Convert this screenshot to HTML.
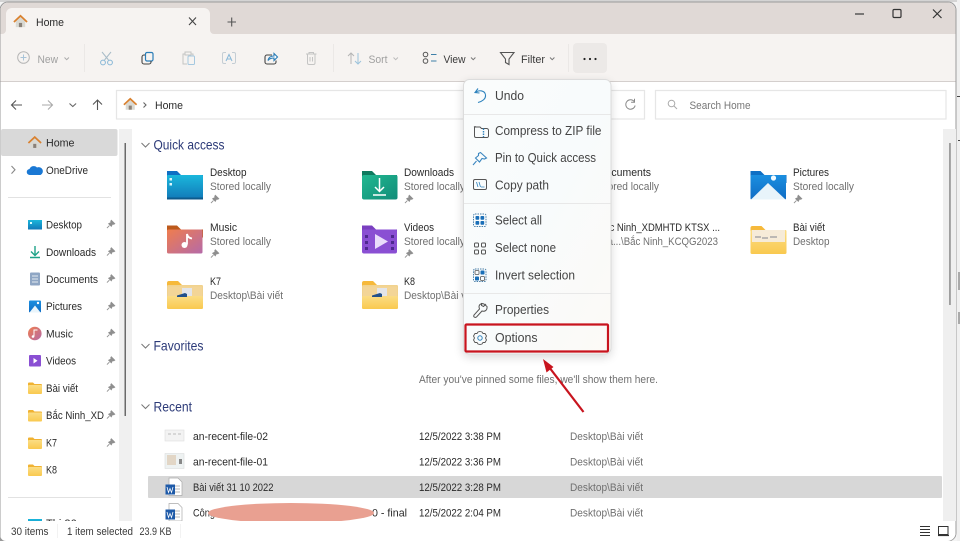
<!DOCTYPE html>
<html><head><meta charset="utf-8"><title>Home</title>
<style>
html,body{margin:0;padding:0;background:#fff;width:960px;height:541px;overflow:hidden}
svg{display:block;position:absolute;left:0;top:0;filter:blur(.35px)}
text{font-family:"Liberation Sans","Noto Sans CJK SC",sans-serif;font-size:11px;fill:#2a2a2a}
.s{fill:#707070}.h{font-size:14px;fill:#2c3a78}.m{font-size:12.5px;fill:#444}.d{fill:#a0a0a0}.t{fill:#3a3a3a}
</style></head><body>
<svg width="960" height="541" viewBox="0 0 960 541" xmlns="http://www.w3.org/2000/svg">
<defs>
<linearGradient id="mg" x1="0" y1="0" x2="1" y2="1"><stop offset="0" stop-color="#fafcfc"/><stop offset=".5" stop-color="#f8fbfc"/><stop offset="1" stop-color="#fcfaf6"/></linearGradient>
<linearGradient id="blue" x1="0" y1="0" x2="0" y2="1"><stop offset="0" stop-color="#1bb7dc"/><stop offset="1" stop-color="#1178b8"/></linearGradient>
<linearGradient id="green" x1="0" y1="0" x2="1" y2="1"><stop offset="0" stop-color="#22b891"/><stop offset="1" stop-color="#118c78"/></linearGradient>
<linearGradient id="mus" x1="0" y1="0" x2="1" y2="1"><stop offset="0" stop-color="#ef7d4e"/><stop offset="1" stop-color="#b56aa8"/></linearGradient>
<linearGradient id="pic" x1="0" y1="0" x2="0" y2="1"><stop offset="0" stop-color="#1b8fe0"/><stop offset="1" stop-color="#0f6cc4"/></linearGradient>
<linearGradient id="yel" x1="0" y1="0" x2="0" y2="1"><stop offset="0" stop-color="#fbdd85"/><stop offset="1" stop-color="#f9c94f"/></linearGradient>
<symbol id="home" viewBox="0 0 16 16"><path d="M3 8 L8 3.5 L13 8 V14 H3Z" fill="#d9d9d3"/><rect x="6.300" y="9.500" width="3.400" height="4.500" fill="#8a8178"/><path d="M1 8.500 L8 2 L15 8.500" fill="none" stroke="#d9812f" stroke-width="1.900"/></symbol>
<symbol id="pin" viewBox="0 0 10 10"><path d="M5.600 .8 L9.200 4.400 L8.200 5 L6.800 4.800 L5.600 7.200 L2.800 4.400 L5.200 3.200 L5 1.800Z M3.600 6.400 L1 9" fill="#8f8f8f" stroke="#8f8f8f" stroke-width=".9"/></symbol>
<symbol id="yf" viewBox="0 0 36 29"><path d="M0 3 a2 2 0 0 1 2-2 h9 l4 4 h19 a2 2 0 0 1 2 2 v6 H0Z" fill="#f6b93b"/><rect y="5" width="36" height="24" rx="1.500" fill="url(#yel)"/></symbol>
<symbol id="sf" viewBox="0 0 14 12"><path d="M0 1.500 a1 1 0 0 1 1-1 h4 l1.500 1.500 h6.500 a1 1 0 0 1 1 1 V5 H0Z" fill="#f0b232"/><rect y="3" width="14" height="9" rx="1" fill="url(#yel)"/></symbol>
<symbol id="kk" viewBox="0 0 36 29"><path d="M0 3 a2 2 0 0 1 2-2 h9 l4 4 h19 a2 2 0 0 1 2 2 v6 H0Z" fill="#f6b93b"/><rect y="5" width="36" height="24" rx="1.500" fill="#f1d28e"/><rect x="1" y="6.500" width="34" height="10" fill="#f3d597"/><path d="M15 8 h10 v9 h-10z" fill="#e3e5ea"/><rect y="16" width="36" height="13" rx="1.500" fill="url(#yel)"/><path d="M10 17 h10 v-3 l-2-1 -8 2.500z" fill="#22508a"/></symbol>
</defs>

<!-- outside the window -->
<rect width="960" height="541" fill="#f4f4f4"/>
<rect x="0" y="0" width="960" height="2" fill="#d4d4d4"/>
<rect x="957" y="0" width="3" height="541" fill="#f0f0f0"/>
<rect x="957" y="96" width="3" height="1" fill="#444"/><rect x="958" y="140" width="2" height="1" fill="#444"/><rect x="958" y="272" width="2" height="18" fill="#aaa"/><rect x="958" y="312" width="2" height="12" fill="#aaa"/>
<rect x="0" y="538" width="3" height="3" fill="#999"/>

<!-- window -->
<path d="M0 10 a8 8 0 0 1 8-8 H948 a8 8 0 0 1 8 8 V533 a8 8 0 0 1 -8 8 H6 a6 6 0 0 1 -6 -4Z" fill="#fff" stroke="#9a9a9a" stroke-width="1"/>
<path d="M0.500 34 V10 a8 8 0 0 1 7.500-7.500 H948 a8 8 0 0 1 7.500 7.500 V34Z" fill="#e0d9d6"/>
<rect x="0.500" y="34" width="955" height="47" fill="#f6f3f1"/>
<rect x="0.500" y="81" width="955" height="1" fill="#d4cfcd"/>

<!-- tab -->
<path d="M0.500 34 H2 a4 4 0 0 0 4-4 V14 a6 6 0 0 1 6-6 H204 a6 6 0 0 1 6 6 V30 a4 4 0 0 0 4 4Z" fill="#f6f3f1"/>
<use href="#home" x="13" y="14" width="15" height="15"/>
<text x="36" y="26" textLength="28" lengthAdjust="spacingAndGlyphs">Home</text>
<path d="M189 17.500 L196 25 M196 17.500 L189 25" stroke="#444" stroke-width="1.100"/>
<path d="M227.500 22 H236 M231.700 17.500 V26.500" stroke="#555" stroke-width="1.100"/>

<!-- caption buttons -->
<path d="M855 14 H864" stroke="#444" stroke-width="1.300"/>
<rect x="893" y="9.500" width="8" height="8" rx="1.200" fill="none" stroke="#333" stroke-width="1.200"/>
<path d="M933 9.500 L941.500 18 M941.500 9.500 L933 18" stroke="#333" stroke-width="1.200"/>

<!-- toolbar -->
<circle cx="23.500" cy="57.500" r="5.800" fill="none" stroke="#b5b5b5" stroke-width="1"/><path d="M20.500 57.500 H26.500 M23.500 54.500 V60.500" stroke="#a9c4d8" stroke-width="1"/>
<text x="37.500" y="63" textLength="20.500" lengthAdjust="spacingAndGlyphs" class="d">New</text>
<path d="M64.500 57.500 l2.200 2.200 l2.200 -2.200" fill="none" stroke="#aaa"/>
<rect x="84" y="44" width="1" height="28" fill="#ebe8e6"/>
<path d="M102 52 L108.500 60 M111 52 L104.500 60" stroke="#a8bcc8" stroke-width="1"/><circle cx="103" cy="62.500" r="2.400" fill="none" stroke="#86b6d6"/><circle cx="110" cy="62.500" r="2.400" fill="none" stroke="#86b6d6"/>
<rect x="145.500" y="52.500" width="7.500" height="8.500" rx="1.500" fill="none" stroke="#2a7db8" stroke-width="1.200"/><path d="M145 55 h-1 a2 2 0 0 0 -2 2 v5 a2 2 0 0 0 2 2 h5 a2 2 0 0 0 2 -2 v-1" fill="none" stroke="#444" stroke-width="1.100"/>
<path d="M185 54 h-2 v10 h4 M191 54 h2 v2" fill="none" stroke="#c4c4c4"/><rect x="185" y="52" width="6" height="3" fill="none" stroke="#c4c4c4"/><rect x="188" y="56" width="6.500" height="8.500" rx="1" fill="none" stroke="#a5c8e0"/>
<path d="M226 52.500 h-2 a1.500 1.500 0 0 0 -1.500 1.500 v8 a1.500 1.500 0 0 0 1.500 1.500 h2 M232 52.500 h2 a1.500 1.500 0 0 1 1.500 1.500 v8 a1.500 1.500 0 0 1 -1.500 1.500 h-2" fill="none" stroke="#c4cdd4"/><path d="M226 61 L229 54.500 L232 61 M227 59 H231" fill="none" stroke="#8ab8d8"/>
<path d="M272 55 h-5 a2 2 0 0 0 -2 2 v5 a2 2 0 0 0 2 2 h7 a2 2 0 0 0 2 -2 v-1.500" fill="none" stroke="#444" stroke-width="1.100"/><path d="M268 60.500 c.5 -3 3 -4.500 6 -4.500 v-2.500 l3.500 3.500 -3.500 3.500 v-2.500 c-2.500 0 -4.500 .5 -6 2.500z" fill="#fff" stroke="#2a7db8" stroke-width="1.100"/>
<path d="M306 54 H316.500 M309 54 V52.500 H313.500 V54 M307.500 54 V63 a1.500 1.500 0 0 0 1.500 1.500 H313.500 a1.500 1.500 0 0 0 1.500 -1.500 V54 M310 57 V61.500 M312.500 57 V61.500" fill="none" stroke="#c4c4c4"/>
<rect x="333" y="44" width="1" height="28" fill="#ebe8e6"/>
<path d="M351 64 V53 M348 56 L351 53 L354 56" fill="none" stroke="#b5b5b5"/><path d="M358 53 V64 M355 61 L358 64 L361 61" fill="none" stroke="#9cc3dc"/>
<text x="368.500" y="63" textLength="19" lengthAdjust="spacingAndGlyphs" class="d">Sort</text>
<path d="M393.500 57.500 l2.200 2.200 l2.200 -2.200" fill="none" stroke="#bbb"/>
<circle cx="425.500" cy="54.500" r="2.300" fill="none" stroke="#555"/><circle cx="425.500" cy="61" r="2.300" fill="none" stroke="#555"/><path d="M431 54.500 H436.500 M431 61 H436.500" stroke="#3e7fa8" stroke-width="1.100"/>
<text x="443.500" y="63" textLength="22" lengthAdjust="spacingAndGlyphs" class="t">View</text>
<path d="M471 57.500 l2.200 2.200 l2.200 -2.200" fill="none" stroke="#777"/>
<path d="M500.500 52.500 H514 L509 59 V64.500 L505.500 62.500 V59Z" fill="none" stroke="#555" stroke-width="1.100"/>
<text x="521" y="63" textLength="24" lengthAdjust="spacingAndGlyphs" class="t">Filter</text>
<path d="M550 57.500 l2.200 2.200 l2.200 -2.200" fill="none" stroke="#777"/>
<rect x="568" y="44" width="1" height="28" fill="#ebe8e6"/>
<rect x="573" y="43" width="34" height="30" rx="4" fill="#ece9e7"/>
<circle cx="584.500" cy="59" r="1.100" fill="#222"/><circle cx="590" cy="59" r="1.100" fill="#222"/><circle cx="595.500" cy="59" r="1.100" fill="#222"/>

<!-- nav -->
<path d="M12 105 H22 M16 100.500 L11.500 105 L16 109.500" fill="none" stroke="#555" stroke-width="1.100"/>
<path d="M42 105 H52 M48 100.500 L52.500 105 L48 109.500" fill="none" stroke="#aaa" stroke-width="1.100"/>
<path d="M69.500 103.500 l3.300 3 l3.300 -3" fill="none" stroke="#666" stroke-width="1.100"/>
<path d="M97.500 110 V100 M93 104.500 L97.500 100 L102 104.500" fill="none" stroke="#555" stroke-width="1.100"/>
<rect x="116.500" y="90.500" width="528" height="28.500" fill="#fff" stroke="#e6e6e6" stroke-width="1.200"/>
<use href="#home" x="123" y="97" width="14.500" height="14.500"/>
<path d="M143.500 102.500 l2.500 2.500 l-2.500 2.500" fill="none" stroke="#666" stroke-width="1.100"/>
<text x="155" y="109" textLength="28" lengthAdjust="spacingAndGlyphs">Home</text>
<path d="M634.500 102 a4.700 4.700 0 1 0 .6 3.500 M634.500 98.800 v3.400 h-3.400" fill="none" stroke="#888" stroke-width="1"/>
<rect x="655.500" y="90.500" width="290.500" height="28.500" fill="#fff" stroke="#e6e6e6" stroke-width="1.200"/>
<circle cx="671.500" cy="103.500" r="3.300" fill="none" stroke="#aaa"/><path d="M674 106 L677 109" stroke="#aaa"/>
<text x="689.500" y="109" textLength="61" lengthAdjust="spacingAndGlyphs" style="fill:#777">Search Home</text>

<!-- sidebar -->
<rect x="1" y="129" width="116.500" height="27" rx="2" fill="#d9d9d9"/>
<use href="#home" x="27.500" y="135" width="14.500" height="15"/>
<text x="46" y="146.500" textLength="28.500" lengthAdjust="spacingAndGlyphs">Home</text>
<path d="M11.500 166 l3.500 3.800 l-3.500 3.800" fill="none" stroke="#888" stroke-width="1.100"/>
<path d="M30 175 a3 3 0 0 1 -.5-6 a4.500 4.500 0 0 1 7.500-1.500 a3.800 3.800 0 0 1 3.500 7.500Z" fill="#1a78d4"/>
<text x="46" y="174" textLength="42" lengthAdjust="spacingAndGlyphs">OneDrive</text>
<rect x="8" y="197" width="103" height="1" fill="#e2e2e2"/>

<rect x="28" y="220" width="14" height="9.500" fill="url(#blue)"/><rect x="30" y="222" width="2" height="2" fill="#dff"/>
<text x="46" y="228.500" textLength="36" lengthAdjust="spacingAndGlyphs">Desktop</text>
<path d="M35 246 V255 M31 251.500 L35 255.500 L39 251.500 M30 257.500 H40" fill="none" stroke="#1fa388" stroke-width="1.400"/>
<text x="46" y="256" textLength="50" lengthAdjust="spacingAndGlyphs">Downloads</text>
<rect x="30" y="272.500" width="10" height="13" rx="1" fill="#8fa6c4"/><path d="M32 276 H38 M32 279 H38 M32 282 H38" stroke="#e3e9f1" stroke-width=".9"/>
<text x="46" y="283" textLength="52" lengthAdjust="spacingAndGlyphs">Documents</text>
<rect x="29" y="300.500" width="12" height="12" rx="1" fill="url(#pic)"/><path d="M29.500 312.500 L35 305.500 L40.500 312.500Z" fill="#eaf5fb"/><circle cx="38" cy="303" r="1.200" fill="#fff"/>
<text x="46" y="310" textLength="36" lengthAdjust="spacingAndGlyphs">Pictures</text>
<circle cx="34.800" cy="333.500" r="6.800" fill="url(#mus)"/><path d="M34 336.500 V330 H37.500" fill="none" stroke="#fff"/><circle cx="33" cy="336.500" r="1.300" fill="#fff"/>
<text x="46" y="337.500" textLength="27" lengthAdjust="spacingAndGlyphs">Music</text>
<rect x="29" y="355" width="12" height="11.500" rx="1" fill="#8a4fd3"/><path d="M33.500 358 L37.500 360.800 L33.500 363.500Z" fill="#fff"/>
<text x="46" y="364.500" textLength="30" lengthAdjust="spacingAndGlyphs">Videos</text>
<use href="#sf" x="28" y="382" width="14" height="12"/>
<text x="46" y="392" textLength="32" lengthAdjust="spacingAndGlyphs">Bài viết</text>
<use href="#sf" x="28" y="409.500" width="14" height="12"/>
<text x="46" y="419" textLength="58" lengthAdjust="spacingAndGlyphs">Bắc Ninh_XD</text>
<use href="#sf" x="28" y="437" width="14" height="12"/>
<text x="46" y="446.500" textLength="11" lengthAdjust="spacingAndGlyphs">K7</text>
<use href="#sf" x="28" y="464" width="14" height="12"/>
<text x="46" y="473.500" textLength="11" lengthAdjust="spacingAndGlyphs">K8</text>
<rect x="8" y="497" width="103" height="1" fill="#e2e2e2"/>
<rect x="28" y="519" width="14" height="9" fill="url(#blue)"/>
<text x="46" y="527">Thi 26</text>

<use href="#pin" x="106" y="219.500" width="9.500" height="9.500"/><use href="#pin" x="106" y="247" width="9.500" height="9.500"/><use href="#pin" x="106" y="274" width="9.500" height="9.500"/><use href="#pin" x="106" y="301.500" width="9.500" height="9.500"/><use href="#pin" x="106" y="328.500" width="9.500" height="9.500"/><use href="#pin" x="106" y="356" width="9.500" height="9.500"/><use href="#pin" x="106" y="383" width="9.500" height="9.500"/><use href="#pin" x="106" y="410" width="9.500" height="9.500"/><use href="#pin" x="106" y="438" width="9.500" height="9.500"/>

<!-- scrollbars -->
<rect x="119" y="129" width="13" height="392" fill="#f0f0f0"/><rect x="124.500" y="143" width="1.500" height="273" fill="#6a6a6a"/>
<rect x="943" y="129" width="13" height="392" fill="#efefef"/><rect x="949.200" y="143" width="1.500" height="162" fill="#8a8a8a"/>

<!-- section headers -->
<path d="M141.500 143 l4 4 l4 -4" fill="none" stroke="#777" stroke-width="1"/>
<text x="153.500" y="149.500" textLength="71" lengthAdjust="spacingAndGlyphs" class="h">Quick access</text>
<path d="M141.500 344 l4 4 l4 -4" fill="none" stroke="#777" stroke-width="1"/>
<text x="153.500" y="350.500" textLength="50" lengthAdjust="spacingAndGlyphs" class="h">Favorites</text>
<path d="M141.500 404.500 l4 4 l4 -4" fill="none" stroke="#777" stroke-width="1"/>
<text x="153.500" y="411.500" textLength="38.500" lengthAdjust="spacingAndGlyphs" class="h">Recent</text>

<!-- folders row 1 -->
<path d="M167 171 h10 l4 4 h22 v8 h-36z" fill="#0f6fc4"/><rect x="167" y="175" width="36" height="24.500" rx="1" fill="url(#blue)"/><rect x="167" y="197.500" width="36" height="2" fill="#0d5a8c"/><rect x="169.500" y="178" width="2.500" height="2.500" fill="#dff7fb"/><rect x="169.500" y="183" width="2.500" height="2.500" fill="#dff7fb"/>
<text x="210" y="176" textLength="36.500" lengthAdjust="spacingAndGlyphs">Desktop</text>
<text x="210" y="190" textLength="61" lengthAdjust="spacingAndGlyphs" class="s">Stored locally</text>
<use href="#pin" x="210" y="194.500" width="9.500" height="9.500"/>

<path d="M362 171 h10 l4 4 h21 v8 h-35z" fill="#0f7a5f"/><rect x="362" y="175" width="35.500" height="24.500" rx="2" fill="url(#green)"/><path d="M379.500 178 V191 M375 187 L379.500 191.500 L384 187 M373 195 H386" fill="none" stroke="#fff" stroke-width="1.500"/>
<text x="404" y="176" textLength="50" lengthAdjust="spacingAndGlyphs">Downloads</text>
<text x="404" y="190" textLength="61" lengthAdjust="spacingAndGlyphs" class="s">Stored locally</text>
<use href="#pin" x="404" y="194.500" width="9.500" height="9.500"/>

<text x="598" y="176" textLength="53" lengthAdjust="spacingAndGlyphs">Documents</text>
<text x="598" y="190" textLength="61" lengthAdjust="spacingAndGlyphs" class="s">Stored locally</text>

<path d="M750.500 171 h10 l4 4 h22 v8 h-36z" fill="#0f6fc4"/><rect x="750.500" y="175" width="35.500" height="24.500" rx="1" fill="url(#pic)"/><path d="M751 199.500 L768 183 L785.500 199.500Z" fill="#e8f4fa"/><circle cx="773.500" cy="178" r="2.600" fill="#f2fbff"/>
<text x="793" y="176" textLength="36" lengthAdjust="spacingAndGlyphs">Pictures</text>
<text x="793" y="190" textLength="61" lengthAdjust="spacingAndGlyphs" class="s">Stored locally</text>
<use href="#pin" x="793" y="194.500" width="9.500" height="9.500"/>

<!-- row 2 -->
<path d="M167 225.500 h10 l4 4 h22 v8 h-36z" fill="#bd5a1c"/><rect x="167" y="229.500" width="35.500" height="24" rx="1.500" fill="url(#mus)"/><path d="M187 244.500 V234 Q188 238 192 238.500" fill="none" stroke="#fff" stroke-width="1.800"/><circle cx="184.500" cy="245" r="3" fill="#fff"/>
<text x="210" y="231" textLength="27" lengthAdjust="spacingAndGlyphs">Music</text>
<text x="210" y="245" textLength="61" lengthAdjust="spacingAndGlyphs" class="s">Stored locally</text>
<use href="#pin" x="210" y="249" width="9.500" height="9.500"/>

<path d="M362 225.500 h10 l4 4 h21 v8 h-35z" fill="#7a3fc0"/><rect x="362" y="229.500" width="35" height="24" rx="2" fill="#8a4fd3"/><path d="M375 234 L388 241.500 L375 249Z" fill="#e9dcfb"/><path d="M365 235 h3 v3 h-3z M365 241 h3 v3 h-3z M365 247 h3 v3 h-3z M391 235 h3 v3 h-3z M391 241 h3 v3 h-3z M391 247 h3 v3 h-3z" fill="#4f2890"/>
<text x="404" y="231" textLength="30" lengthAdjust="spacingAndGlyphs">Videos</text>
<text x="404" y="245" textLength="61" lengthAdjust="spacingAndGlyphs" class="s">Stored locally</text>
<use href="#pin" x="404" y="249" width="9.500" height="9.500"/>

<text x="598" y="231" textLength="122" lengthAdjust="spacingAndGlyphs">Bắc Ninh_XDMHTD KTSX ...</text>
<text x="598" y="245" textLength="120" lengthAdjust="spacingAndGlyphs" class="s">Dĩa...\Bắc Ninh_KCQG2023</text>

<use href="#yf" x="750.500" y="225" width="36" height="29"/><rect x="752" y="230" width="33" height="12" fill="#f6ebd8"/><path d="M755 237 h6 M762 238 h6 M770 237 h7" stroke="#a8a8a8" stroke-width="1.500"/>
<text x="793" y="231" textLength="32" lengthAdjust="spacingAndGlyphs">Bài viết</text>
<text x="793" y="245" textLength="36.500" lengthAdjust="spacingAndGlyphs" class="s">Desktop</text>

<!-- row 3 -->
<use href="#kk" x="167" y="280" width="36" height="29"/>
<text x="210" y="285" textLength="11" lengthAdjust="spacingAndGlyphs">K7</text>
<text x="210" y="299" textLength="73" lengthAdjust="spacingAndGlyphs" class="s">Desktop\Bài viết</text>
<use href="#kk" x="362" y="280" width="36" height="29"/>
<text x="404" y="285" textLength="11" lengthAdjust="spacingAndGlyphs">K8</text>
<text x="404" y="299" textLength="73" lengthAdjust="spacingAndGlyphs" class="s">Desktop\Bài viết</text>

<text x="419" y="383" textLength="239" lengthAdjust="spacingAndGlyphs" class="s">After you've pinned some files, we'll show them here.</text>

<!-- recent -->
<rect x="148" y="476" width="794" height="22" rx="1" fill="#d7d7d7"/>
<rect x="165" y="430" width="19" height="11" fill="#f3f3f3" stroke="#dedede" stroke-width=".6"/><path d="M168 434 h3 M173 434 h3 M178 434 h3" stroke="#bbb"/>
<rect x="165" y="453.500" width="19" height="15" fill="#eef2f2" stroke="#ddd" stroke-width=".6"/><rect x="167" y="455" width="9" height="10" fill="#e2d6c6"/><rect x="179" y="459" width="3" height="5" fill="#888"/>
<path d="M169 478 h9 l4 4 v13.500 h-13z" fill="#fff" stroke="#aaa" stroke-width=".7"/><path d="M172 486 h8 M172 489 h8 M172 492 h8" stroke="#b9b9b9"/><rect x="165.500" y="484.500" width="9.500" height="10" fill="#1e5aa8"/><path d="M167 487 l1.500 5.500 l1.500 -4 l1.500 4 l1.500 -5.500" fill="none" stroke="#fff" stroke-width=".8"/>
<path d="M169 503.500 h9 l4 4 v13.500 h-13z" fill="#fff" stroke="#aaa" stroke-width=".7"/><path d="M172 511 h8 M172 514 h8 M172 517 h8" stroke="#b9b9b9"/><rect x="165.500" y="509.500" width="9.500" height="10" fill="#1e5aa8"/><path d="M167 512 l1.500 5.500 l1.500 -4 l1.500 4 l1.500 -5.500" fill="none" stroke="#fff" stroke-width=".8"/>

<text x="193" y="440" textLength="75" lengthAdjust="spacingAndGlyphs">an-recent-file-02</text>
<text x="193" y="465.500" textLength="75" lengthAdjust="spacingAndGlyphs">an-recent-file-01</text>
<text x="193" y="491" textLength="80.500" lengthAdjust="spacingAndGlyphs">Bài viết 31 10 2022</text>
<text x="193" y="516.500" textLength="22" lengthAdjust="spacingAndGlyphs">Công</text>
<text x="372" y="516.500" textLength="35" lengthAdjust="spacingAndGlyphs">0 - final</text>
<text x="419" y="440" textLength="82" lengthAdjust="spacingAndGlyphs">12/5/2022 3:38 PM</text>
<text x="419" y="465.500" textLength="82" lengthAdjust="spacingAndGlyphs">12/5/2022 3:36 PM</text>
<text x="419" y="491" textLength="82" lengthAdjust="spacingAndGlyphs">12/5/2022 3:28 PM</text>
<text x="419" y="516.500" textLength="82" lengthAdjust="spacingAndGlyphs">12/5/2022 2:04 PM</text>
<text x="570" y="440" textLength="73" lengthAdjust="spacingAndGlyphs" class="s">Desktop\Bài viết</text>
<text x="570" y="465.500" textLength="73" lengthAdjust="spacingAndGlyphs" class="s">Desktop\Bài viết</text>
<text x="570" y="491" textLength="73" lengthAdjust="spacingAndGlyphs" class="s">Desktop\Bài viết</text>
<text x="570" y="516.500" textLength="73" lengthAdjust="spacingAndGlyphs" class="s">Desktop\Bài viết</text>
<ellipse cx="291" cy="513" rx="83" ry="10" fill="#e9a091"/>

<!-- status bar -->
<path d="M0.500 521 H955.500 V533 a8 8 0 0 1 -8 8 H6 a6 6 0 0 1 -5.500 -4Z" fill="#fff"/>
<text x="11" y="535" textLength="37.500" lengthAdjust="spacingAndGlyphs" class="t">30 items</text>
<text x="67" y="535" textLength="66" lengthAdjust="spacingAndGlyphs" class="t">1 item selected</text>
<text x="139.500" y="535" textLength="32" lengthAdjust="spacingAndGlyphs" class="t">23.9 KB</text>
<rect x="57" y="524" width="1" height="14" fill="#f2f2f2"/><rect x="180" y="524" width="1" height="14" fill="#f2f2f2"/>
<path d="M920 526.500 H930 M920 529.500 H930 M920 532.500 H930 M920 535.500 H930" stroke="#333" stroke-width="1"/>
<rect x="938.500" y="526.500" width="9.500" height="8" fill="none" stroke="#333" stroke-width="1"/><path d="M938 535.500 H949" stroke="#333" stroke-width="1.200"/>

<!-- context menu -->
<rect x="463" y="79.500" width="148" height="274.500" rx="6" fill="#000" opacity=".16" style="filter:blur(5px)" transform="translate(0 3)"/>
<rect x="463.500" y="79.500" width="147.500" height="274.500" rx="6" fill="url(#mg)" stroke="#dcdcdc" stroke-width="1"/>
<rect x="464" y="114" width="146.500" height="1" fill="#e8e8e8"/>
<rect x="464" y="203" width="146.500" height="1" fill="#e8e8e8"/>
<rect x="464" y="293" width="146.500" height="1" fill="#e8e8e8"/>

<path d="M478 88.500 L475 92.500 L479.500 93 M475.500 92.500 C479 89.500 485 90.500 485.500 95 C486 99 482 101.500 478 102.500" fill="none" stroke="#2f83bd" stroke-width="1.100"/>
<text x="495" y="100" textLength="29" lengthAdjust="spacingAndGlyphs" class="m">Undo</text>
<path d="M474 127 h6 l1.500 1.500 h5.500 a2 2 0 0 1 1.500 1.500 v6 a1.500 1.500 0 0 1 -1.500 1.500 h-11 a1.500 1.500 0 0 1 -1.500 -1.500 v-8 a1.500 1.500 0 0 1 1 -1.500z" fill="none" stroke="#555"/><path d="M483.500 128.500 v8.500" stroke="#2f83bd" stroke-width="1.400" stroke-dasharray="1.500 1"/>
<text x="495" y="135" textLength="106.500" lengthAdjust="spacingAndGlyphs" class="m">Compress to ZIP file</text>
<path d="M480.500 152.500 L486.500 158 L484.500 159 L482 158.500 L479.500 162 L475.500 158 L478.500 155.500 L478.500 153.500Z M476.500 161 L473 165" fill="none" stroke="#3b87c0" stroke-width="1.100"/>
<text x="495" y="162" textLength="101" lengthAdjust="spacingAndGlyphs" class="m">Pin to Quick access</text>
<rect x="473.500" y="179.500" width="13" height="10" rx="1.500" fill="none" stroke="#555"/><path d="M476.500 182 L478 187 M479 182 L480.500 187 M481 187 H484.500" stroke="#2f83bd" stroke-width=".8"/>
<text x="495" y="189.500" textLength="54" lengthAdjust="spacingAndGlyphs" class="m">Copy path</text>
<rect x="473.500" y="214" width="12.500" height="12.500" rx="1.500" fill="none" stroke="#4a7fa8" stroke-dasharray="1.500 1"/><rect x="475.500" y="216" width="3.700" height="3.700" rx=".8" fill="#1a6fb8"/><rect x="480.500" y="216" width="3.700" height="3.700" rx=".8" fill="#1a6fb8"/><rect x="475.500" y="221" width="3.700" height="3.700" rx=".8" fill="#1a6fb8"/><rect x="480.500" y="221" width="3.700" height="3.700" rx=".8" fill="#1a6fb8"/>
<text x="495" y="224.500" textLength="47" lengthAdjust="spacingAndGlyphs" class="m">Select all</text>
<rect x="474.500" y="243" width="4" height="4" rx="1" fill="none" stroke="#555"/><rect x="481.500" y="243" width="4" height="4" rx="1" fill="none" stroke="#555"/><rect x="474.500" y="250" width="4" height="4" rx="1" fill="none" stroke="#555"/><rect x="481.500" y="250" width="4" height="4" rx="1" fill="none" stroke="#555"/>
<text x="495" y="252" textLength="61" lengthAdjust="spacingAndGlyphs" class="m">Select none</text>
<rect x="473.500" y="269" width="12.500" height="12.500" rx="1.500" fill="none" stroke="#4a7fa8" stroke-dasharray="1.500 1"/><rect x="480.500" y="270.500" width="4" height="4" rx=".8" fill="#1a6fb8"/><rect x="475" y="276.500" width="4" height="4" rx=".8" fill="#1a6fb8"/><rect x="475" y="270.500" width="4" height="4" rx="1" fill="none" stroke="#555" stroke-width=".8"/><rect x="480.500" y="276.500" width="4" height="4" rx="1" fill="none" stroke="#555" stroke-width=".8"/>
<text x="495" y="279.500" textLength="80" lengthAdjust="spacingAndGlyphs" class="m">Invert selection</text>
<path d="M486 304 L483.500 306.500 L481.500 305.500 L481.500 303.500 L484 304 M484 304 C482 303 479 304 479 307 L479.500 309 L474 315 C473 317 475 318 476.500 317 L482 311 C485 312 487.500 310 487 306.500Z" fill="none" stroke="#555" stroke-width="1"/>
<text x="495" y="314" textLength="54" lengthAdjust="spacingAndGlyphs" class="m">Properties</text>
<circle cx="480" cy="338" r="2.200" fill="none" stroke="#2f83bd"/><path d="M480 331.500 L482 332 L483 333.500 L485 333.500 L486.500 336 L485.500 338 L486.500 340 L485 342.500 L483 342.500 L482 344 L480 344.500 L478 344 L477 342.500 L475 342.500 L473.500 340 L474.500 338 L473.500 336 L475 333.500 L477 333.500 L478 332Z" fill="none" stroke="#555" stroke-width=".9"/>
<text x="495" y="342" textLength="42.500" lengthAdjust="spacingAndGlyphs" class="m">Options</text>

<rect x="465.500" y="324.500" width="142.500" height="27" rx="1" fill="none" stroke="#c8141e" stroke-width="2.200"/>

<!-- arrow -->
<path d="M583.500 412 L549 367" stroke="#c8141e" stroke-width="2.200"/>
<path d="M543 359 L553.500 367 L546.500 372.500Z" fill="#c8141e"/>
</svg>
</body></html>
